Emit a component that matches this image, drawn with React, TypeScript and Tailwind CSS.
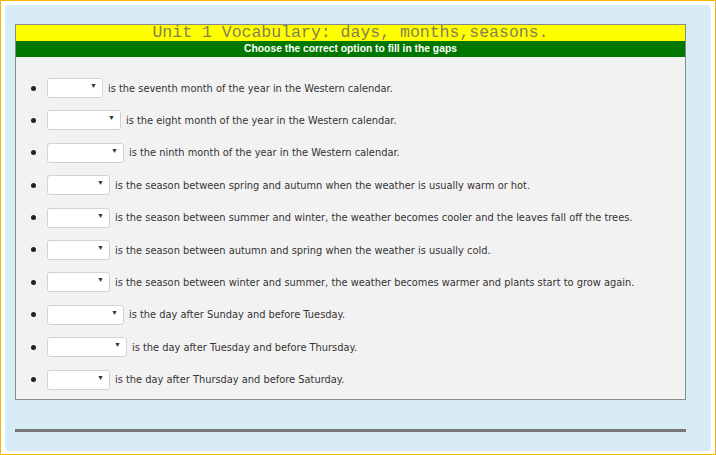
const items = [
  { w: 56, text: "is the seventh month of the year in the Western calendar." },
  { w: 74, text: "is the eight month of the year in the Western calendar." },
  { w: 77, text: "is the ninth month of the year in the Western calendar." },
  { w: 63, text: "is the season between spring and autumn when the weather is usually warm or hot." },
  { w: 63, text: "is the season between summer and winter, the weather becomes cooler and the leaves fall off the trees." },
  { w: 63, text: "is the season between autumn and spring when the weather is usually cold." },
  { w: 63, text: "is the season between winter and summer, the weather becomes warmer and plants start to grow again." },
  { w: 77, text: "is the day after Sunday and before Tuesday." },
  { w: 80, text: "is the day after Tuesday and before Thursday." },
  { w: 63, text: "is the day after Thursday and before Saturday." },
];

function Gap({ w }: { w: number }) {
  return (
    <span
      className="relative inline-block h-[20px] shrink-0 rounded-[3px] border border-[#d2d2d2] bg-white"
      style={{ width: w }}
    >
      <span className="absolute right-[5px] top-[2px] font-['Liberation_Sans',sans-serif] text-[7px] text-[#333]">▼</span>
    </span>
  );
}

export default function App() {
  return (
    <div className="h-[455px] w-[716px] border border-[#f5b400] bg-white p-[4px] pb-[3px]">
      <div className="flex h-full flex-col rounded-[4px] bg-[#d8ecf6] px-[10px] pt-[19px]">
        <div className="w-[671px] border border-[#8a8a8a] bg-[#f3f2f2]">
          <div className="h-[16px] bg-[#ffff00] text-center font-['Liberation_Mono',monospace] text-[16.5px] leading-[16px] text-[#857f55]">
            Unit 1 Vocabulary: days, months,seasons.
          </div>
          <div className="h-[16px] bg-[#007700] text-center font-['Liberation_Sans',sans-serif] text-[10.3px] font-bold leading-[16px] text-white">
            Choose the correct option to fill in the gaps
          </div>
          <ul className="flex flex-col gap-[12.4px] pl-[15px] pt-[21px] pb-[9px] font-['DejaVu_Sans',sans-serif] text-[9.85px] text-[#333]">
            {items.map((it, i) => (
              <li key={i} className="flex h-[20px] items-center">
                <span className="mr-[11px] h-[5px] w-[5px] shrink-0 rounded-full bg-[#222]" />
                <Gap w={it.w} />
                <span className="ml-[5px] whitespace-nowrap pt-[2px]">{it.text}</span>
              </li>
            ))}
          </ul>
        </div>
        <div className="mt-[29px] h-[3px] w-[671px] bg-[#777777]" />
      </div>
    </div>
  );
}
